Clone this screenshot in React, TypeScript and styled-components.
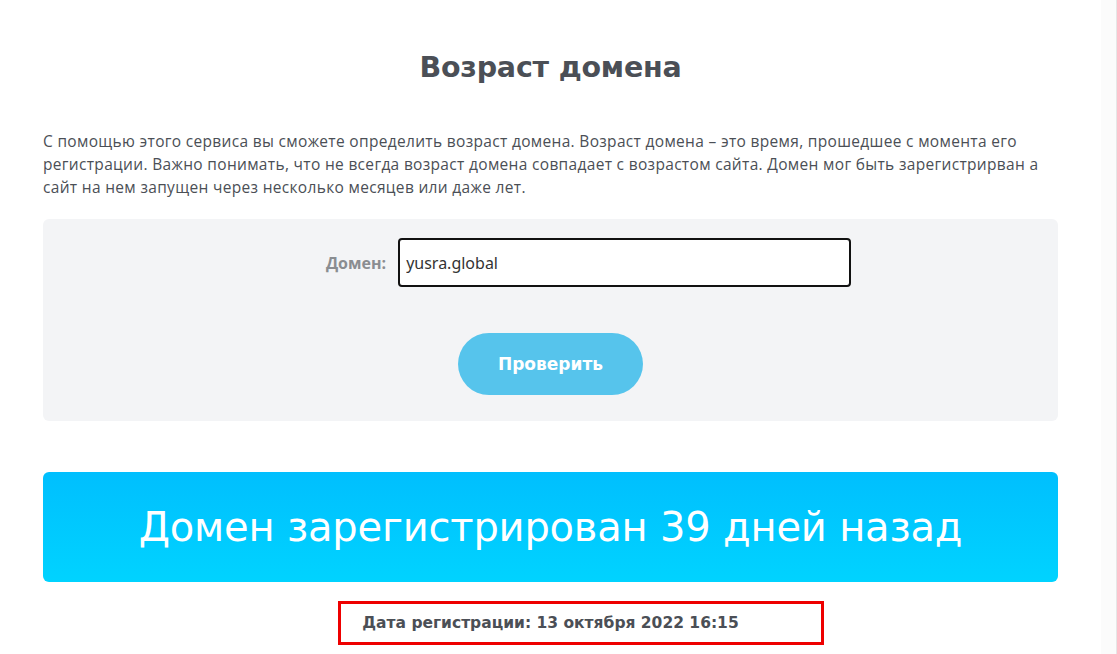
import styled, { createGlobalStyle } from "styled-components"

const GlobalStyle = createGlobalStyle`
    html, body {
        margin : 0;
        padding : 0;
        background : #ffffff;
    }
    body {
        font-family : "Open Sans", "Noto Sans", sans-serif;
    }
`

const Page = styled.div`
    display : flex;
    width : 1117px;
    height : 654px;
    overflow : hidden;
`

const Main = styled.main`
    flex : 1;
    display : flex;
    flex-direction : column;
    padding : 0 43px;
`

const ScrollTrack = styled.div`
    width : 16px;
    background : #fbfbfb;
    border-right : 1px solid #e6e6e6;
    box-sizing : border-box;
`

const Title = styled.h1`
    margin : 48px 0 0;
    text-align : center;
    font-family : "DejaVu Sans", sans-serif;
    font-size : 28.5px;
    font-weight : 700;
    line-height : 40px;
    color : #4b4f56;
    letter-spacing : -0.2px;
`

const Intro = styled.p`
    margin : 42px 0 0;
    font-size : 15.5px;
    line-height : 23px;
    letter-spacing : 0.32px;
    color : #4b4f56;
`

const FormCard = styled.form`
    margin-top : 20px;
    height : 202px;
    box-sizing : border-box;
    background : #f3f4f6;
    border-radius : 6px;
    display : flex;
    flex-direction : column;
    align-items : center;
    padding-top : 19px;
`

const FieldRow = styled.div`
    display : flex;
    align-items : center;
    gap : 12px;
    margin-left : 76px;
`

const Label = styled.label`
    font-size : 16px;
    font-weight : 700;
    color : #8a8d91;
`

const Input = styled.input`
    width : 453px;
    height : 49px;
    box-sizing : border-box;
    border : 2px solid #111;
    border-radius : 4px;
    background : #fff;
    padding : 0 6px;
    font-family : "Noto Sans", sans-serif;
    font-size : 16px;
    color : #333;
    outline : none;
`

const CheckButton = styled.button`
    margin-top : 46px;
    width : 185px;
    height : 62px;
    border : none;
    border-radius : 31px;
    background : #56c4ec;
    color : #fff;
    font-family : "DejaVu Sans", sans-serif;
    font-size : 17px;
    font-weight : 700;
    cursor : pointer;
`

const ResultBanner = styled.div`
    margin-top : 51px;
    height : 110px;
    border-radius : 6px;
    background : linear-gradient(180deg, #00bffe 0%, #00d3ff 100%);
    display : flex;
    align-items : center;
    justify-content : center;
    color : #fff;
    font-family : "DejaVu Sans", sans-serif;
    font-size : 40px;
    font-weight : 400;
    letter-spacing : -0.2px;
`

const DateRow = styled.div`
    margin-top : 29px;
    display : flex;
    justify-content : center;
`

const DateText = styled.div`
    position : relative;
    font-family : "DejaVu Sans", sans-serif;
    font-size : 15.5px;
    font-weight : 700;
    color : #4b4f56;
    line-height : 24px;
`

const Highlight = styled.span`
    position : absolute;
    left : -24px;
    right : -85px;
    top : -10px;
    bottom : -10px;
    border : 3px solid #ee0000;
    pointer-events : none;
`

export default function App() {
    return (
        <>
            <GlobalStyle />
            <Page>
                <Main>
                    <Title>Возраст домена</Title>
                    <Intro>
                        С помощью этого сервиса вы сможете определить возраст домена. Возраст домена – это время, прошедшее с момента его регистрации. Важно понимать, что не всегда возраст домена совпадает с возрастом сайта. Домен мог быть зарегистрирван а сайт на нем запущен через несколько месяцев или даже лет.
                    </Intro>
                    <FormCard onSubmit={e => e.preventDefault()}>
                        <FieldRow>
                            <Label htmlFor="domain">Домен:</Label>
                            <Input id="domain" defaultValue="yusra.global" spellCheck />
                        </FieldRow>
                        <CheckButton type="submit">Проверить</CheckButton>
                    </FormCard>
                    <ResultBanner>Домен зарегистрирован 39 дней назад</ResultBanner>
                    <DateRow>
                        <DateText>
                            Дата регистрации: 13 октября 2022 16:15
                            <Highlight />
                        </DateText>
                    </DateRow>
                </Main>
                <ScrollTrack />
            </Page>
        </>
    )
}
